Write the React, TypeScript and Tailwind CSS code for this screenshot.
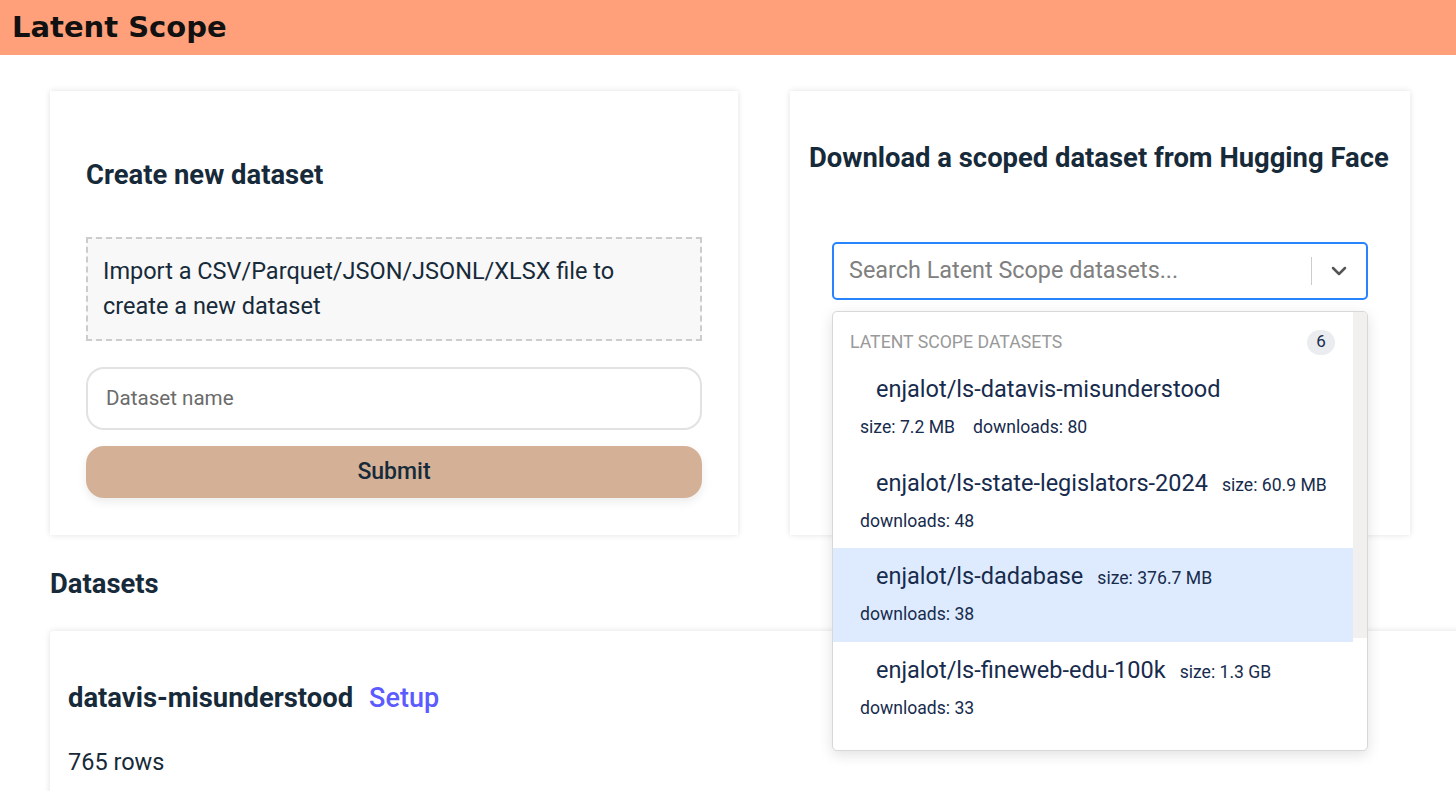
import { ChevronDown } from "lucide-react";

type Opcion = {
  naam: string;
  size: string;
  downloads: string;
  // true: size staat nog op de eerste regel naast de naam
  sizeInline: boolean;
};

const opties: Opcion[] = [
  { naam: "enjalot/ls-datavis-misunderstood", size: "7.2 MB", downloads: "80", sizeInline: false },
  { naam: "enjalot/ls-state-legislators-2024", size: "60.9 MB", downloads: "48", sizeInline: true },
  { naam: "enjalot/ls-dadabase", size: "376.7 MB", downloads: "38", sizeInline: true },
  { naam: "enjalot/ls-fineweb-edu-100k", size: "1.3 GB", downloads: "33", sizeInline: true },
];

const kaart = "bg-white shadow-[0_0_6px_rgba(0,0,0,0.12)]";
const kop = "text-[27.4px] leading-[41px] font-bold text-[#172a3a]";

function Optie({ o, actief }: { o: Opcion; actief: boolean }) {
  return (
    <div className={`pl-[27px] pr-[10px] pt-[11px] pb-[14.5px] ${actief ? "bg-[#deebff]" : ""}`}>
      <div className="flex items-baseline whitespace-nowrap">
        <span className="ml-4 shrink-0 text-[23.5px] leading-[35px] text-[#172b4d]">{o.naam}</span>
        {o.sizeInline && (
          <span className="ml-[14px] shrink-0 text-[17.6px] text-[#172b4d]">size: {o.size}</span>
        )}
      </div>
      <div className="mt-[7px] flex whitespace-nowrap text-[17.6px] leading-[26px] text-[#172b4d]">
        {!o.sizeInline && <span className="mr-[18px]">size: {o.size}</span>}
        <span>downloads: {o.downloads}</span>
      </div>
    </div>
  );
}

export default function App() {
  return (
    <div className="h-[791px] overflow-hidden bg-white font-['Roboto',sans-serif]">
      <header className="flex h-[55px] items-center bg-[#ffa07a] px-3">
        <span className="font-['DejaVu_Sans',sans-serif] text-[29px] font-bold text-[#111]">
          Latent Scope
        </span>
      </header>

      <main className="px-[50px] pt-9">
        <div className="flex gap-[52px]">
          {/* Nieuwe dataset aanmaken */}
          <section className={`${kaart} flex h-[444px] w-[688px] shrink-0 flex-col px-9 pt-[64px]`}>
            <h2 className={kop}>Create new dataset</h2>
            <div className="mt-[41px] border-2 border-dashed border-[#cccccc] bg-[#f8f8f8] px-[15px] py-[15px] text-[23.5px] leading-[35px] text-[#172a3a]">
              Import a CSV/Parquet/JSON/JSONL/XLSX file to
              <br />
              create a new dataset
            </div>
            <div className="mt-[26px] flex h-[63px] items-center rounded-[18px] border-2 border-[#e2e2e2] px-[18px] text-[20.6px] text-[#6b6b6b]">
              Dataset name
            </div>
            <button
              type="button"
              className="mt-4 h-[52px] rounded-[18px] bg-[#d4b196] text-[23px] font-medium text-[#172a3a] shadow-[0_4px_10px_rgba(0,0,0,0.08)]"
            >
              Submit
            </button>
          </section>

          {/* Download van Hugging Face */}
          <section className={`${kaart} relative h-[444px] w-[620px] shrink-0 px-[19px] pt-[47px]`}>
            <h2 className={kop}>Download a scoped dataset from Hugging Face</h2>
            <div className="relative mx-[23px] mt-[63px]">
              <div className="flex h-[58px] items-center rounded-[5px] border-2 border-[#2684ff] pl-[15px]">
                <span className="flex-1 text-[23.4px] text-[#808080]">Search Latent Scope datasets...</span>
                <span className="h-[28px] w-px bg-[#cccccc]" />
                <span className="flex w-[54px] items-center justify-center text-[#555]">
                  <ChevronDown size={24} strokeWidth={2.5} />
                </span>
              </div>

              {/* Uitgeklapt menu, ligt over de kaart eronder */}
              <div className="absolute left-0 right-0 top-[69px] z-10 h-[440px] overflow-hidden rounded-[5px] border border-[#d8d8d8] bg-white shadow-[0_4px_14px_rgba(0,0,0,0.12)]">
                <div className="flex h-full">
                  <div className="min-w-0 flex-1 pt-[17px]">
                    <div className="flex items-center justify-between pl-[17px] pr-[18px]">
                      <span className="text-[17.7px] leading-[26px] uppercase text-[#999999]">Latent Scope datasets</span>
                      <span className="flex h-[25px] min-w-[28px] items-center justify-center rounded-full bg-[#ebecf0] px-2 text-[17px] text-[#172b4d]">
                        6
                      </span>
                    </div>
                    <div className="mt-[6px]">
                      {opties.map((o, i) => (
                        <Optie key={o.naam} o={o} actief={i === 2} />
                      ))}
                    </div>
                  </div>
                  <div className="w-[14px] shrink-0 self-start bg-[#f1f0ee]" style={{ height: 326 }} />
                </div>
              </div>
            </div>
          </section>
        </div>

        <h2 className={`${kop} mt-[29px]`}>Datasets</h2>

        <section className={`${kaart} mt-[26px] h-[200px] w-[1440px] rounded-tl-[4px] px-[18px] pt-[47px]`}>
          <div className="flex items-baseline gap-[16px]">
            <span className={kop}>datavis-misunderstood</span>
            <a className="text-[27px] font-medium text-[#5b5bff]">Setup</a>
          </div>
          <p className="mt-[26px] text-[23.5px] leading-[35px] text-[#172a3a]">765 rows</p>
        </section>
      </main>
    </div>
  );
}
